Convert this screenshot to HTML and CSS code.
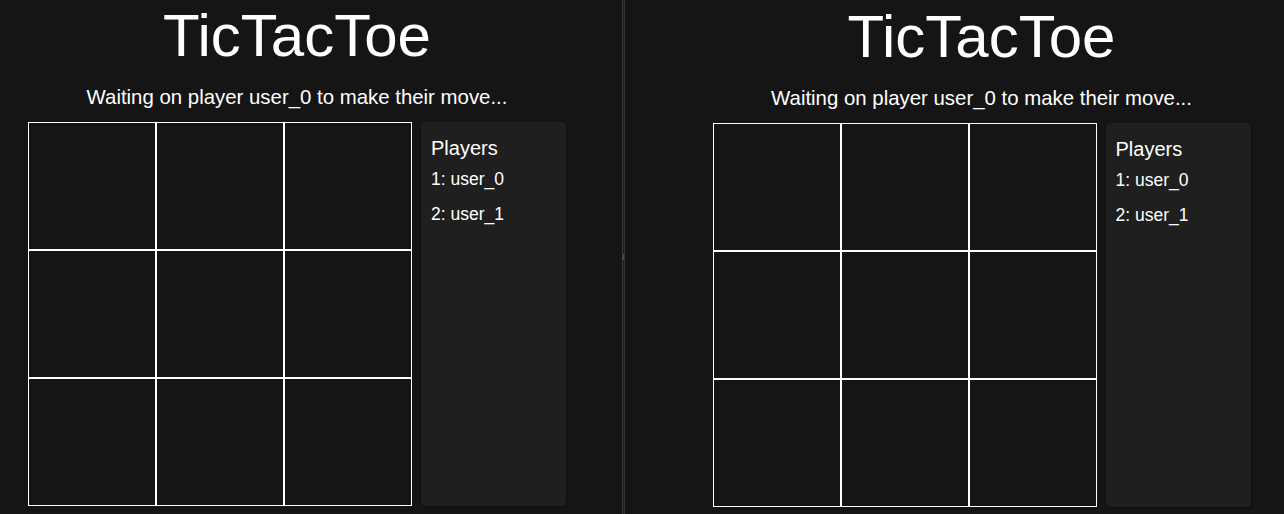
FILE: index.html
```html
<!DOCTYPE html>
<html lang="en">
<head>
<meta charset="utf-8">
<title>TicTacToe</title>
<link rel="stylesheet" href="styles.css">
</head>
<body>
<div class="split">
  <section class="pane pane-left">
    <div class="game">
      <h1 class="title">TicTacToe</h1>
      <p class="status">Waiting on player user_0 to make their move...</p>
      <div class="play">
        <div class="board">
          <div class="cell"></div><div class="cell"></div><div class="cell"></div>
          <div class="cell"></div><div class="cell"></div><div class="cell"></div>
          <div class="cell"></div><div class="cell"></div><div class="cell"></div>
        </div>
        <aside class="players">
          <h3 class="players-title">Players</h3>
          <p class="player">1: user_0</p>
          <p class="player">2: user_1</p>
        </aside>
      </div>
    </div>
  </section>
  <div class="divider"><span class="grip"></span></div>
  <section class="pane pane-right">
    <div class="game">
      <h1 class="title">TicTacToe</h1>
      <p class="status">Waiting on player user_0 to make their move...</p>
      <div class="play">
        <div class="board">
          <div class="cell"></div><div class="cell"></div><div class="cell"></div>
          <div class="cell"></div><div class="cell"></div><div class="cell"></div>
          <div class="cell"></div><div class="cell"></div><div class="cell"></div>
        </div>
        <aside class="players">
          <h3 class="players-title">Players</h3>
          <p class="player">1: user_0</p>
          <p class="player">2: user_1</p>
        </aside>
      </div>
    </div>
  </section>
</div>
</body>
</html>
```
FILE: styles.css
```css
html, body {
  margin: 0;
  padding: 0;
  background: #151515;
  color: #ffffff;
  font-family: "Liberation Sans", Arial, sans-serif;
  overflow: hidden;
}

.split {
  display: flex;
  height: 514px;
  width: 1284px;
  overflow: hidden;
}

.pane {
  flex-shrink: 0;
  height: 514px;
  overflow: hidden;
}

.pane-left {
  width: 594px;
  padding-right: 28px;
}

.pane-right {
  width: 713px;
  padding-top: 1px;
}

.divider {
  flex-shrink: 0;
  width: 1px;
  height: 514px;
  border-left: 1px solid #3a3a3a;
  border-right: 1px solid #343434;
  background: #1a1a1a;
  display: flex;
  align-items: center;
}

.grip {
  display: block;
  width: 1px;
  height: 6px;
  background: #4a4a4a;
}

.game {
  display: flex;
  flex-direction: column;
  align-items: center;
}

.title {
  margin: 0;
  font-size: 60px;
  line-height: 71px;
  font-weight: 400;
}

.status {
  margin: 14px 0 0;
  font-size: 20.4px;
  line-height: 24px;
}

.play {
  margin-top: 13px;
  display: flex;
  gap: 9px;
  align-items: stretch;
}

.board {
  display: grid;
  grid-template-columns: repeat(3, 128px);
  grid-template-rows: repeat(3, 128px);
}

.cell {
  box-sizing: border-box;
  border: 1px solid #ffffff;
  background: #151515;
}

.players {
  width: 145px;
  box-sizing: border-box;
  padding: 15px 10px;
  background: #1f1f1f;
  border-radius: 4px;
  box-shadow: 0 1px 2px rgba(0, 0, 0, 0.45);
  display: flex;
  flex-direction: column;
  gap: 15px;
}

.players-title {
  margin: 0 0 -5px;
  font-size: 20px;
  line-height: 22px;
  font-weight: 400;
}

.player {
  margin: 0;
  font-size: 17.5px;
  line-height: 20px;
}
```
